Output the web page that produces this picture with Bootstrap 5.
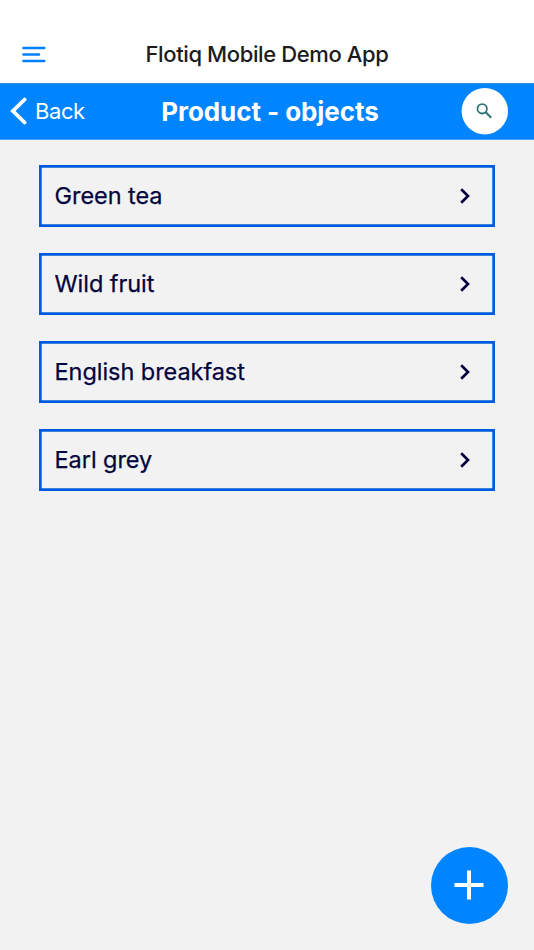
<!DOCTYPE html>
<html lang="en">
<head>
<meta charset="utf-8">
<meta name="viewport" content="width=device-width, initial-scale=1">
<title>Flotiq Mobile Demo App</title>
<link href="https://cdn.jsdelivr.net/npm/bootstrap@5.3.0/dist/css/bootstrap.min.css" rel="stylesheet">
<style>
body{font-family:Inter,"Liberation Sans",sans-serif;background:#f2f2f2;color:#04043c}
svg{display:block;flex:none}
.top-bar{height:83px;padding-top:26px}
.side{width:110px}
.menu-btn{padding-left:22px}
.app-title{font-size:22px;font-weight:500;color:#1c1c1e;line-height:28px;letter-spacing:-.38px;padding-bottom:1px}
.sub-bar{height:57px;background:#0084ff;border-top:1px solid #2a8fee;border-bottom:1px solid #4ba3f3}
.back-btn{padding:0 0 1px 10px;font-size:22px;line-height:28px;letter-spacing:-.4px}
.back-btn span{margin-left:8px}
.page-title{font-size:26px;font-weight:700;line-height:32px;padding-left:6px;letter-spacing:-.07px}
.search-btn{width:47px;height:47px;margin-right:26px}
.items{padding:25.3px 39px;gap:25.85px}
.item{height:62px;padding:0 23.5px 0 15.5px;box-shadow:inset 0 0 0 2.7px #005be0;font-size:23.5px;line-height:30px;letter-spacing:-.05px;-webkit-text-stroke:.25px #04043c}
.add-btn{width:77.5px;height:77.5px;margin:0 26px 26px;background:#0084ff}
</style>
</head>
<body class="vh-100 d-flex flex-column overflow-hidden">
<header class="top-bar bg-white d-flex align-items-center justify-content-between">
  <div class="side"><a href="#" class="menu-btn d-block" aria-label="Menu"><svg width="24" height="18" viewBox="0 0 24 18" fill="none" stroke="#0080fb" stroke-width="2.5" stroke-linecap="round"><path d="M1.4 2H22.3M1.4 8.5H17M1.4 15H22.3"/></svg></a></div>
  <h1 class="app-title m-0 text-nowrap">Flotiq Mobile Demo App</h1>
  <div class="side"></div>
</header>
<nav class="sub-bar text-white d-flex align-items-center justify-content-between">
  <div class="side"><a href="#" class="back-btn d-flex align-items-center text-white text-decoration-none"><svg width="17" height="28" viewBox="0 0 17 28" fill="none" stroke="#fff" stroke-width="3.8"><path d="M14.6 2.5 2.9 14 14.6 25.5" stroke-linecap="round"/></svg><span>Back</span></a></div>
  <h2 class="page-title m-0 text-nowrap">Product - objects</h2>
  <div class="side d-flex justify-content-end"><a href="#" class="search-btn d-block" aria-label="Search"><svg width="47" height="47" viewBox="0 0 47 47" fill="none" stroke="#317579" stroke-width="1.8"><circle cx="23.8" cy="23.2" r="23.2" fill="#fff" stroke="none"/><circle cx="21.2" cy="20.8" r="4.7"/><path d="M24.5 24.1 30.2 29.8" stroke-width="2.1"/></svg></a></div>
</nav>
<main class="items d-flex flex-column flex-grow-1">
  <div class="item d-flex align-items-center justify-content-between"><span>Green tea</span><svg width="14" height="18" viewBox="0 0 14 18" fill="none" stroke="#04043c" stroke-width="2.7"><path d="M3.2 2.2 10 9 3.2 15.8"/></svg></div>
  <div class="item d-flex align-items-center justify-content-between"><span>Wild fruit</span><svg width="14" height="18" viewBox="0 0 14 18" fill="none" stroke="#04043c" stroke-width="2.7"><path d="M3.2 2.2 10 9 3.2 15.8"/></svg></div>
  <div class="item d-flex align-items-center justify-content-between"><span>English breakfast</span><svg width="14" height="18" viewBox="0 0 14 18" fill="none" stroke="#04043c" stroke-width="2.7"><path d="M3.2 2.2 10 9 3.2 15.8"/></svg></div>
  <div class="item d-flex align-items-center justify-content-between"><span>Earl grey</span><svg width="14" height="18" viewBox="0 0 14 18" fill="none" stroke="#04043c" stroke-width="2.7"><path d="M3.2 2.2 10 9 3.2 15.8"/></svg></div>
</main>
<a href="#" class="add-btn rounded-circle d-flex align-items-center justify-content-center align-self-end flex-shrink-0" aria-label="Add"><svg width="30" height="30" viewBox="0 0 30 30" fill="none" stroke="#fff" stroke-width="4"><path d="M15 .5v29M.5 15h29"/></svg></a>
<script src="https://cdn.jsdelivr.net/npm/bootstrap@5.3.0/dist/js/bootstrap.bundle.min.js"></script>
</body>
</html>
